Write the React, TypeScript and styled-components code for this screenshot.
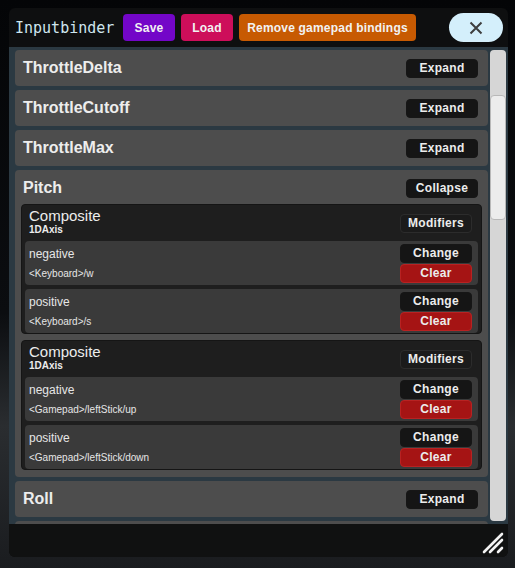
import * as React from 'react';
import styled, { createGlobalStyle } from 'styled-components';

interface Binding {
    name: string;
    path: string;
}

interface Composite {
    kind: string;
    bindings: Binding[];
}

interface Action {
    name: string;
    open?: boolean;
    composites?: Composite[];
}

const actions: Action[] = [
    { name: 'ThrottleDelta' },
    { name: 'ThrottleCutoff' },
    { name: 'ThrottleMax' },
    {
        name: 'Pitch',
        open: true,
        composites: [
            {
                kind: '1DAxis',
                bindings: [
                    { name: 'negative', path: '<Keyboard>/w' },
                    { name: 'positive', path: '<Keyboard>/s' },
                ],
            },
            {
                kind: '1DAxis',
                bindings: [
                    { name: 'negative', path: '<Gamepad>/leftStick/up' },
                    { name: 'positive', path: '<Gamepad>/leftStick/down' },
                ],
            },
        ],
    },
    { name: 'Roll' },
    { name: 'Yaw' },
];

const GlobalStyle = createGlobalStyle`
  html, body {
    margin: 0;
    padding: 0;
  }
  body {
    width: 515px;
    height: 568px;
    overflow: hidden;
    background: linear-gradient(180deg, #040507 0%, #0b0d10 55%, #2a2d30 75%, #1a1c1f 100%);
    font-family: "Liberation Sans", Arial, sans-serif;
  }
`;

const Window = styled.div`
  margin: 8px 0 0 9px;
  width: 499px;
  height: 549px;
  display: flex;
  flex-direction: column;
  background-color: #0e0f10;
  border-radius: 6px;
  overflow: hidden;
`;

const Header = styled.div`
  height: 39px;
  flex: 0 0 39px;
  display: flex;
  align-items: center;
  padding: 0 5px 0 6px;
  box-sizing: border-box;
`;

const Title = styled.span`
  font-family: "DejaVu Sans Mono", monospace;
  font-size: 15px;
  color: #cfe6ef;
  margin-right: 8px;
  width: 100px;
`;

const ToolButton = styled.button<{ bg: string; w: number }>`
  width: ${({ w }) => w}px;
  height: 27px;
  margin-right: 6px;
  padding: 0;
  border: none;
  border-radius: 4px;
  background-color: ${({ bg }) => bg};
  color: #f2f2f2;
  font-family: "Liberation Sans", Arial, sans-serif;
  font-weight: bold;
  font-size: 12px;
  letter-spacing: 0.2px;
`;

const CloseButton = styled.button`
  margin-left: auto;
  width: 54px;
  height: 29px;
  border: none;
  border-radius: 15px;
  background-color: #d4effb;
  display: flex;
  align-items: center;
  justify-content: center;
  padding: 0;
`;

const Body = styled.div`
  flex: 1;
  display: flex;
  background-color: #2b3942;
  min-height: 0;
`;

const List = styled.div`
  flex: 1;
  overflow: hidden;
  padding: 3px 0 0 6px;
  display: flex;
  flex-direction: column;
  gap: 4px;
`;

const Scrollbar = styled.div`
  width: 16px;
  flex: 0 0 16px;
  margin: 3px 2px 3px 2px;
  background-color: #d6d6d6;
  border-radius: 4px;
  padding-top: 45px;
  box-sizing: border-box;
`;

const Thumb = styled.div`
  height: 125px;
  background-color: #ececec;
  border: 1px solid #b8b8b8;
  border-radius: 4px;
  box-sizing: border-box;
`;

const ActionCard = styled.div`
  flex: 0 0 auto;
  background-color: #4d4d4d;
  border-radius: 4px;
  padding: 0 10px 0 8px;
`;

const ActionHead = styled.div`
  height: 36px;
  display: flex;
  align-items: center;
  justify-content: space-between;
`;

const ActionName = styled.span`
  font-size: 16px;
  font-weight: bold;
  color: #ededed;
`;

const SmallButton = styled.button<{ tone?: 'dark' | 'red' | 'outline' }>`
  width: 72px;
  height: 19px;
  padding: 0;
  border-radius: 4px;
  border: 1px solid
    ${({ tone }) => (tone === 'red' ? '#b82222' : tone === 'outline' ? '#2c2c2c' : '#161616')};
  background-color: ${({ tone }) =>
        tone === 'red' ? '#a51414' : tone === 'outline' ? '#1b1b1b' : '#151515'};
  color: #ececec;
  font-family: "Liberation Sans", Arial, sans-serif;
  font-weight: bold;
  font-size: 12px;
  letter-spacing: 0.3px;
  line-height: 17px;
`;

const ActionBody = styled.div`
  display: flex;
  flex-direction: column;
  gap: 6px;
  margin: -2px -4px 0 -2px;
  padding-bottom: 7px;
`;

const CompositeBox = styled.div`
  background-color: #1e1e1e;
  border: 1px solid #151515;
  border-radius: 4px;
  padding: 0 3px;
`;

const CompositeHead = styled.div`
  height: 36px;
  display: flex;
  align-items: center;
  justify-content: space-between;
  padding: 0 6px 0 4px;
`;

const CompositeTitle = styled.div`
  display: flex;
  flex-direction: column;
  color: #ececec;
  margin-top: -3px;
`;

const CompositeName = styled.span`
  font-size: 15px;
  line-height: 16px;
`;

const CompositeKind = styled.span`
  font-size: 10px;
  font-weight: bold;
  line-height: 11px;
`;

const BindingList = styled.div`
  display: flex;
  flex-direction: column;
  gap: 4px;
`;

const BindingRow = styled.div`
  height: 44px;
  background-color: #3a3a3a;
  border-radius: 4px;
  display: flex;
  align-items: center;
  justify-content: space-between;
  padding: 0 6px 0 4px;
`;

const BindingText = styled.div`
  display: flex;
  flex-direction: column;
  gap: 7px;
  color: #e6e6e6;
`;

const BindingName = styled.span`
  font-size: 12px;
  line-height: 13px;
`;

const BindingPath = styled.span`
  font-size: 10px;
  line-height: 11px;
`;

const BindingButtons = styled.div`
  display: flex;
  flex-direction: column;
  gap: 1px;
`;

const Footer = styled.div`
  flex: 0 0 30px;
  display: flex;
  justify-content: flex-end;
  align-items: flex-end;
  padding: 0 4px 3px 0;
  background-color: #101111;
`;

const CloseIcon = () => (
    <svg width="14" height="14" viewBox="0 0 14 14">
        <path d="M1.5 1.5 L12.5 12.5 M12.5 1.5 L1.5 12.5" stroke="#3e3e3e" strokeWidth="2" />
    </svg>
);

const ResizeIcon = () => (
    <svg width="22" height="22" viewBox="0 0 22 22">
        <path
            d="M2 20 L20 2 M8 20 L20 8 M16 20 L20 16"
            stroke="#f2f2f2"
            strokeWidth="2.6"
            strokeLinecap="round"
        />
    </svg>
);

const CompositeView: React.FC<{ composite: Composite }> = ({ composite }) => (
    <CompositeBox>
        <CompositeHead>
            <CompositeTitle>
                <CompositeName>Composite</CompositeName>
                <CompositeKind>{composite.kind}</CompositeKind>
            </CompositeTitle>
            <SmallButton tone="outline">Modifiers</SmallButton>
        </CompositeHead>
        <BindingList>
            {composite.bindings.map((b) => (
                <BindingRow key={b.path}>
                    <BindingText>
                        <BindingName>{b.name}</BindingName>
                        <BindingPath>{b.path}</BindingPath>
                    </BindingText>
                    <BindingButtons>
                        <SmallButton>Change</SmallButton>
                        <SmallButton tone="red">Clear</SmallButton>
                    </BindingButtons>
                </BindingRow>
            ))}
        </BindingList>
    </CompositeBox>
);

const App: React.FC = () => (
    <>
        <GlobalStyle />
        <Window>
            <Header>
                <Title>Inputbinder</Title>
                <ToolButton bg="#7306c8" w={52}>Save</ToolButton>
                <ToolButton bg="#cd0e5a" w={52}>Load</ToolButton>
                <ToolButton bg="#c75a02" w={177}>Remove gamepad bindings</ToolButton>
                <CloseButton>
                    <CloseIcon />
                </CloseButton>
            </Header>
            <Body>
                <List>
                    {actions.map((a) => (
                        <ActionCard key={a.name}>
                            <ActionHead>
                                <ActionName>{a.name}</ActionName>
                                <SmallButton>{a.open ? 'Collapse' : 'Expand'}</SmallButton>
                            </ActionHead>
                            {a.open && a.composites && (
                                <ActionBody>
                                    {a.composites.map((c, i) => (
                                        <CompositeView key={i} composite={c} />
                                    ))}
                                </ActionBody>
                            )}
                        </ActionCard>
                    ))}
                </List>
                <Scrollbar>
                    <Thumb />
                </Scrollbar>
            </Body>
            <Footer>
                <ResizeIcon />
            </Footer>
        </Window>
    </>
);

export default App;
